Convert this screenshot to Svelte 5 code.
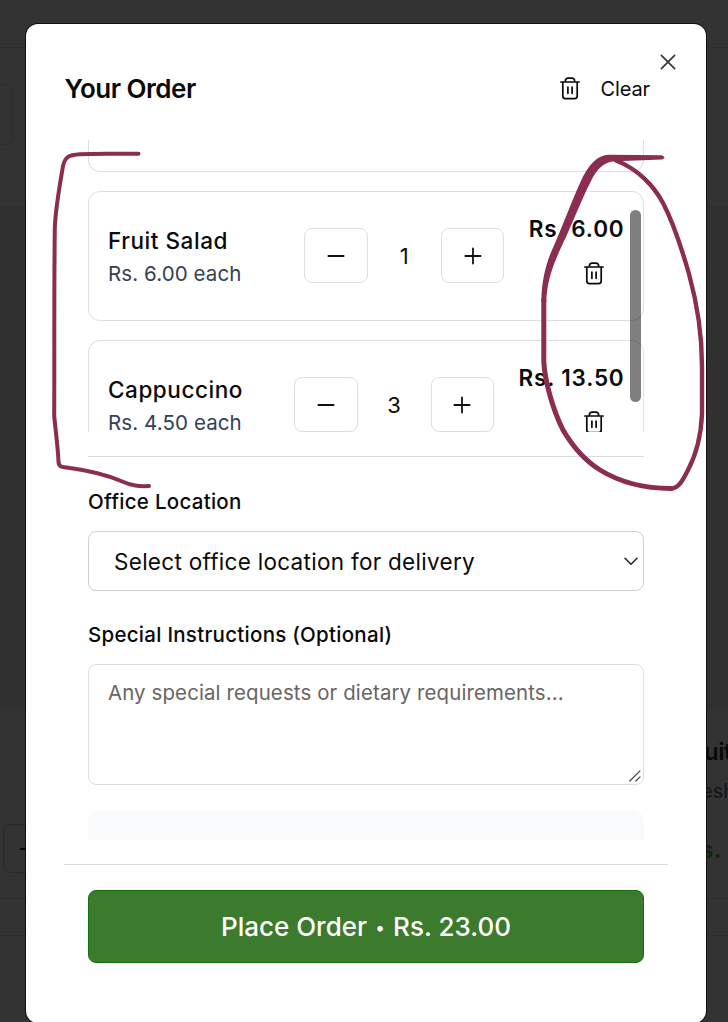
<script>
  const items = [
    { name: 'Fruit Salad', each: 'Rs. 6.00 each', qty: 1, total: 'Rs. 6.00' },
    { name: 'Cappuccino', each: 'Rs. 4.50 each', qty: 3, total: 'Rs. 13.50' }
  ];
</script>

{#snippet trash()}
  <svg class="trash" width="20" height="23" viewBox="0 0 20 23" fill="none" stroke="currentColor" stroke-width="1.7" stroke-linecap="round" stroke-linejoin="round">
    <path d="M.9 5h18.200M2.800 5v14a2.600 2.600 0 0 0 2.600 2.600h9.200a2.600 2.600 0 0 0 2.600-2.600V5M5.400 4.800V3.700A2.600 2.600 0 0 1 8 1.100h4a2.600 2.600 0 0 1 2.600 2.600v1.100M7.900 10v6.300M12.100 10v6.300" />
  </svg>
{/snippet}

<div class="page">
  <div class="backdrop">
    <div class="band top"></div>
    <div class="band search"></div>
    <div class="band image"></div>
    <div class="band details"></div>
    <div class="band gap"></div>
    <div class="ghost-field"></div>
    <div class="ghost-step"><i></i></div>
    <span class="ghost name">uit</span>
    <span class="ghost desc">esh</span>
    <span class="ghost cost">s.</span>
  </div>

  <div class="modal">
    <header>
      <h2>Your Order</h2>
      <button class="clear">{@render trash()}<span>Clear</span></button>
      <button class="close" aria-label="Close">
        <svg width="16" height="16" viewBox="0 0 16 16" fill="none" stroke="#333" stroke-width="1.6" stroke-linecap="round"><path d="M1.4 1.4l13.2 13.2M14.6 1.4L1.4 14.6" /></svg>
      </button>
    </header>

    <div class="body">
      <div class="list">
        <div class="card stub"></div>
        {#each items as item}
          <div class="card">
            <div class="info">
              <div class="name">{item.name}</div>
              <div class="each">{item.each}</div>
            </div>
            <div class="stepper">
              <button aria-label="Decrease"><svg width="18" height="18" viewBox="0 0 18 18" stroke="#111" stroke-width="1.8" stroke-linecap="round"><path d="M1.4 9h15.2" /></svg></button>
              <span>{item.qty}</span>
              <button aria-label="Increase"><svg width="18" height="18" viewBox="0 0 18 18" stroke="#111" stroke-width="1.8" stroke-linecap="round"><path d="M1.4 9h15.2M9 1.4v15.2" /></svg></button>
            </div>
            <div class="price">
              <strong>{item.total}</strong>
              <button class="remove" aria-label="Remove">{@render trash()}</button>
            </div>
          </div>
        {/each}
      </div>
      <div class="thumb"></div>

      <div class="form">
        <div class="label office">Office Location</div>
        <div class="select">
          <span>Select office location for delivery</span>
          <svg width="14" height="9" viewBox="0 0 14 9" fill="none" stroke="#222" stroke-width="1.5" stroke-linecap="round" stroke-linejoin="round"><path d="M1 1.2l6 6 6-6" /></svg>
        </div>
        <div class="label special">Special Instructions (Optional)</div>
        <div class="area">
          <span>Any special requests or dietary requirements...</span>
          <svg width="12" height="12" viewBox="0 0 12 12" stroke="#444" stroke-width="1.2" stroke-linecap="round"><path d="M.8 11L11 .8M6.9 11L11 6.9" /></svg>
        </div>
        <div class="summary"></div>
      </div>
    </div>

    <footer>
      <button class="place"><span>Place Order</span><span class="dot">•</span><span>Rs. 23.00</span></button>
    </footer>
  </div>

  <svg class="ink" width="728" height="1022" viewBox="0 0 728 1022" fill="none" stroke="#8b2d50" stroke-width="4" stroke-linecap="round" stroke-linejoin="round">
    <path d="M138.500 153.800C115 153.800 96 153.200 80 154.200C68 155 65 157 63 166C59 190 55.500 208 54.800 228C54 290 54.500 360 54.200 416C56 434 58 448 58.500 462C59 468 64 467 70 468C92 471 107 475 121 481C132 486 139 486.500 149 486" />
    <path stroke-width="4.400" d="M616 160.500C638 169 654 186 663 203C674 224 683 253 689 274C697 303 702 335 702 366L702 414C701 435 696 455 688 470C683 480 679 488 671 488.500" />
    <path stroke-width="5" d="M543.800 300L543.800 362C545 382 553 410 563 430C573 447 584 460 600 470C618 481 643 488.500 671 488.500" />
    <path fill="#8b2d50" stroke="none" d="M609 154.800L662 155.200Q667 157.500 662 159.600L616 161.200Q602 161 593 177C583 196 575 217 566 237C553 264 547 280 546.300 302L541.300 302C541.500 280 546 264 552 250C561 230 571 203 580 183C588 165 597 155 609 154.800Z" />
  </svg>
</div>

<style>
  :global(body) { background: #333; }
  .page { position: relative; width: 728px; height: 1022px; overflow: hidden; background: #333; font-family: Inter, "Liberation Sans", sans-serif; color: #0a0a0a; display: flex; flex-direction: column; padding: 24px 22px 0 26px; box-sizing: border-box; }
  .page * { box-sizing: border-box; }
  button { font: inherit; color: inherit; background: none; border: 0; padding: 0; display: flex; align-items: center; justify-content: center; }
  svg { display: block; flex: none; }
  .backdrop { position: absolute; inset: 0; display: flex; flex-direction: column; overflow: hidden; }
  .band { border-bottom: 1px solid #2d2d2d; flex: none; }
  .top { height: 48px; }
  .search { height: 159px; }
  .image { height: 501px; background: #303030; border: 0; }
  .details { height: 191px; }
  .gap { height: 37px; }
  .ghost-field { position: absolute; left: -30px; top: 84px; width: 43px; height: 61px; border: 1px solid #2d2d2d; border-radius: 8px; }
  .ghost-step { position: absolute; left: 3px; top: 824px; width: 60px; height: 49px; border: 1px solid #2a2a2a; border-radius: 8px; }
  .ghost-step i { display: block; width: 14px; height: 2px; margin: 23px 0 0 16px; background: #080808; }
  .ghost { position: absolute; white-space: nowrap; line-height: 30px; }
  .ghost.name { left: 704px; top: 737px; font-size: 24px; font-weight: 600; letter-spacing: -0.5px; color: #090909; }
  .ghost.desc { left: 701px; top: 776px; font-size: 20px; color: #111418; }
  .ghost.cost { left: 700px; top: 835px; font-size: 24px; font-weight: 700; color: #0c260c; }

  .modal { position: relative; height: 999px; flex: none; background: #fff; border-radius: 12px; box-shadow: 0 0 0 1px #111; display: flex; flex-direction: column; }
  header { height: 116px; flex: none; display: flex; align-items: flex-start; justify-content: space-between; padding: 46px 56px 0 38.500px; position: relative; }
  h2 { margin: 0; font-size: 26px; line-height: 38px; font-weight: 600; letter-spacing: -0.500px; white-space: nowrap; }
  .clear { height: 37px; gap: 20.500px; font-size: 20px; letter-spacing: -0.100px; }
  .close { position: absolute; left: 634px; top: 30px; }
  .body { position: relative; height: 700px; flex: none; overflow: hidden; padding: 0 62px; }
  .list { height: 292px; overflow: hidden; display: flex; flex-direction: column; gap: 19px; }
  .card { height: 130px; flex: none; border: 1px solid #dfdfdf; border-radius: 12px; display: flex; align-items: center; padding: 0 19px; }
  .stub { height: 32px; border-top: 0; border-radius: 0 0 12px 12px; }
  .info { flex: 1; white-space: nowrap; padding-top: 1px; }
  .info .name { font-size: 22.500px; line-height: 33px; font-weight: 500; letter-spacing: 0.550px; }
  .each { font-size: 20.500px; line-height: 33px; color: #334155; letter-spacing: 0.100px; }
  .stepper { display: flex; align-items: center; margin: 0 24.500px 1px 0; }
  .stepper button { width: 63.500px; height: 55px; border: 1px solid #dfdfdf; border-radius: 8px; }
  .stepper span { width: 73px; text-align: center; font-size: 22px; }
  .price { display: flex; flex-direction: column; align-items: flex-end; }
  .price strong { font-size: 22.500px; line-height: 32px; font-weight: 600; letter-spacing: 0.800px; margin-right: -0.500px; white-space: nowrap; }
  .remove { height: 34px; margin: 11px 20px 9px 0; }
  .thumb { position: absolute; left: 604px; top: 70px; width: 11px; height: 192px; border-radius: 6px; background: rgba(0, 0, 0, .5); }
  .form { display: flex; flex-direction: column; margin-top: 24px; border-top: 1px solid #dcdcdc; }
  .label { font-size: 20.500px; line-height: 30px; font-weight: 500; letter-spacing: 0.270px; white-space: nowrap; }
  .office { margin-top: 30px; }
  .select { margin-top: 14px; height: 60px; border: 1px solid #cdd0d6; border-radius: 8px; display: flex; align-items: center; justify-content: space-between; padding: 0 5px 0 25px; font-size: 22.500px; letter-spacing: 0.290px; white-space: nowrap; }
  .special { margin-top: 29px; }
  .area { position: relative; margin-top: 14px; height: 121px; border: 1px solid #dfdfdf; border-radius: 8px; padding: 13px 19px; font-size: 20.400px; line-height: 30px; letter-spacing: 0.140px; color: #69645f; white-space: nowrap; }
  .area svg { position: absolute; right: 2px; bottom: 2px; }
  .summary { margin-top: 25px; height: 60px; border-radius: 12px; background: #f8fafc; }
  footer { margin: 24px 38px 0; border-top: 1px solid #dcdcdc; padding: 25px 24px 0; }
  .place { width: 100%; height: 73px; border-radius: 8px; background: #3c7a2d; border: 1px solid #14720c; color: #fff; font-size: 26px; font-weight: 500; white-space: nowrap; }
  .dot { width: 26px; text-align: center; font-size: 18px; padding-top: 2px; }
  .ink { position: absolute; left: 0; top: 0; }
</style>
